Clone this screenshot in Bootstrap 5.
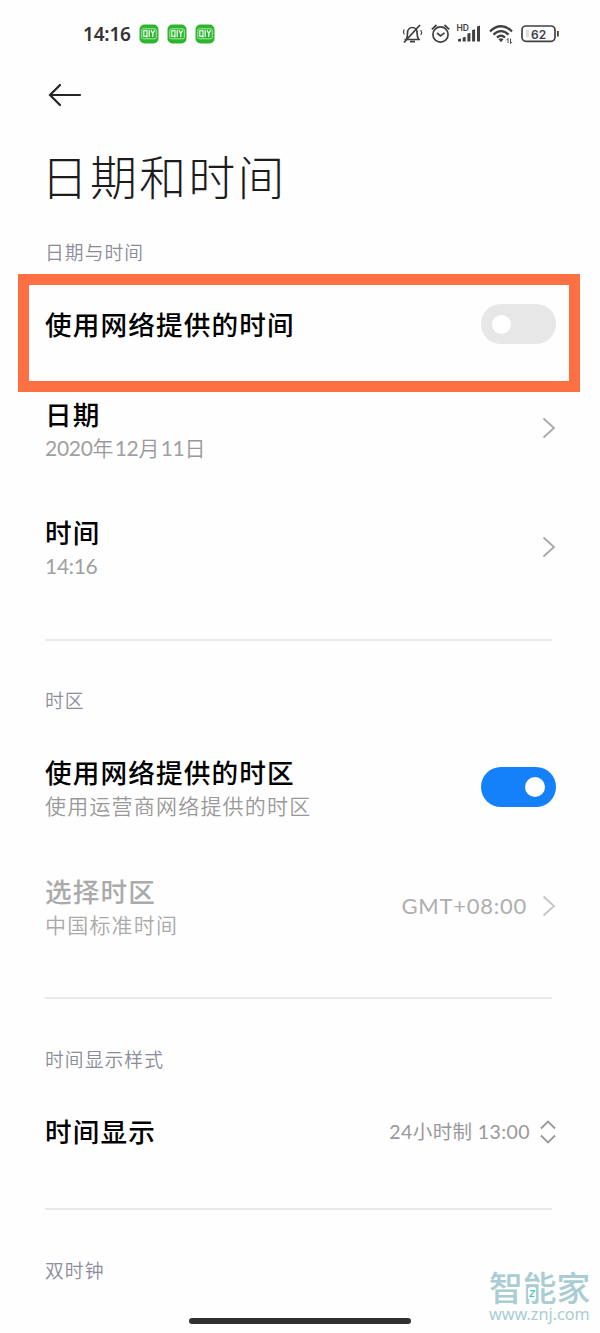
<!DOCTYPE html>
<html lang="zh-CN">
<head>
<meta charset="utf-8">
<meta name="viewport" content="width=device-width, initial-scale=1">
<title>日期和时间</title>
<link rel="stylesheet" href="https://cdn.jsdelivr.net/npm/bootstrap@5.3.0/dist/css/bootstrap.min.css">
<style>
body{background:#fefefe;color:#000;font-family:Lato,"Noto Sans CJK SC",sans-serif}
.screen{width:600px;height:1333px}
.statusbar{height:68px;padding:0 41px 0 83px;color:#333}
.clock{font:600 19px/24px "Noto Sans","Noto Sans CJK SC",sans-serif;letter-spacing:-.2px;width:56px}
.backbar{height:54px;padding-left:48px}
.page-title{height:112px;padding-left:41px;font-size:47px;font-weight:300;letter-spacing:2.1px;color:#1c1c1c;line-height:106px;font-family:"Noto Sans CJK SC",sans-serif}
.group-label{height:52px;line-height:50px;padding-left:45px;font-size:18.8px;letter-spacing:1.05px;color:#8b8c98;font-weight:350;font-family:"Noto Sans CJK SC",sans-serif}
.setting{height:119px;padding:0 44px 0 45px}
.setting-text{padding-top:5px}
.name{font-size:26.6px;line-height:33px;font-weight:500;letter-spacing:1.15px;font-family:"Noto Sans CJK SC",sans-serif;white-space:nowrap;position:relative;top:-1px}
.hint{font-size:21px;line-height:33px;letter-spacing:1.2px;color:#999;font-weight:350;white-space:nowrap}
.num{font-size:21px;letter-spacing:-.3px;font-weight:400;color:#a0a0a0}
.off .name{color:#aaa}.off .hint{color:#aaa}
.value{color:#999;white-space:nowrap}
.value-time{font-size:19.5px;letter-spacing:.4px;margin-right:10px}
.value-zone{font-size:22px;letter-spacing:.75px;color:#aeaeae;margin-right:15px}
.rule{height:2px;margin:0 48px 0 45px;background:#e9e9e9}
.toggle{width:75px;height:40px;border-radius:20px;background:#e7e7e8;padding:0 11px}
.toggle i{width:19px;height:19px;border-radius:50%;background:#fff}
.toggle.on{background:#1480fa}.toggle.on i{width:20px;height:20px}
.highlight{left:18px;top:274px;width:562px;height:118px;border:11px solid #fc7044}
.homebar{left:189px;top:1318px;width:222px;height:6px;border-radius:3px;background:#303030}
.brand{left:489px;top:1268px;color:#a9cdd3}
.brand-name{font:500 33.8px/38px "Noto Sans CJK SC",sans-serif}
.brand-url{font:400 16.2px/16px "Noto Sans",sans-serif}
.brand-z{left:39px;top:20px;font:italic 700 9px/11px Inter,sans-serif;color:#35cfc5;background:#fefefe;padding:0 1px}
</style>
<script src="https://cdn.jsdelivr.net/npm/bootstrap@5.3.0/dist/js/bootstrap.bundle.min.js"></script>
</head>
<body>
<svg class="d-none">
<symbol id="chev" viewBox="0 0 14 22"><path d="M1.5 1.5 12 11 1.5 20.5" fill="none" stroke="currentColor" stroke-width="1.8"/></symbol>
<symbol id="qiy" viewBox="0 0 20 20"><rect x=".5" y=".5" width="19" height="19" rx="5" fill="#2db52d"/><rect x="2.8" y="4.8" width="14.500" height="10" rx="1.5" fill="none" stroke="#b9efb5" stroke-width=".9"/><rect x="4.800" y="6.700" width="3.200" height="5.600" fill="none" stroke="#fff" stroke-width="1.100"/><path d="M7 11.500 8.300 13.500M10.200 6.200v6.800M12 6.200l1.800 3.300 1.800-3.300M13.800 9.300V13" fill="none" stroke="#fff" stroke-width="1.200"/></symbol>
</svg>
<main class="screen position-relative overflow-hidden">
<header class="statusbar d-flex align-items-center">
<div class="clock">14:16</div>
<div class="d-flex gap-2"><svg width="20" height="20"><use href="#qiy"/></svg><svg width="20" height="20"><use href="#qiy"/></svg><svg width="20" height="20"><use href="#qiy"/></svg></div>
<svg class="ms-auto" width="159" height="28" viewBox="400 20 159 28" fill="none" stroke="#404040" stroke-width="1.7">
<path d="M404.5 39.500h15.500M406.500 39c1-2 1-3.500 1-6 0-3 2-5.500 4.800-5.500s4.800 2.500 4.800 5.500c0 2.500 0 4 1.400 6M410 41.700h5"/><path d="M404 42.500 420 25" stroke-width="1.8"/><path d="M404.200 29.500c-1 1.700-1 3.500 0 5M420.800 30c1 1.700 1 3.500 0 5" stroke-width="1.200"/>
<circle cx="440.500" cy="34.500" r="7.600"/><path d="m437 33 3.500 3 4-3.200M431.800 29.300l4.700-4.300M449.200 29.300l-4.700-4.300"/>
<text x="456.500" y="31" fill="#404040" stroke="none" font-family="Inter, sans-serif" font-size="8.500" font-weight="600">HD</text>
<path stroke="none" fill="#404040" d="M458 39.200l3-.8v3h-3zM462.700 37.500l3-.8v4.700h-3zM467.400 33.500l3-.8v8.700h-3zM472.100 30l3-.8v12.200h-3zM477 26.500l3-1v15.900h-3z"/>
<path d="M490 31.500c6.500-7 15.500-7 22 0M493.500 34.600c4.500-4.700 10.500-4.700 15 0M497 37.600c2.700-2.700 5.300-2.700 8 0" stroke-width="2.300"/><path d="m498.500 39.300q2.500-2 5 0l-2.500 3z" fill="#404040" stroke="none"/><path d="M508 43v-4.500l-1.500 1.700M510.500 38.500v5l1.500-1.700" stroke-width=".9"/>
<rect x="522" y="26" width="33" height="15.300" rx="4"/><path d="M557.900 31v5.500" stroke-width="1.800"/><path d="M526 29.500h3v8h-3z" fill="#dedede" stroke="none"/>
<text x="531" y="38.500" fill="#404040" stroke="none" font-family="Inter, sans-serif" font-size="12" font-weight="600">62</text>
</svg>
</header>
<div class="backbar d-flex align-items-center"><svg width="34" height="24" viewBox="0 0 34 24" fill="none" stroke="#242424" stroke-width="2.200" stroke-linecap="round"><path d="M2.500 12H32M12 2 2 12l10 10"/></svg></div>
<h1 class="page-title m-0">日期和时间</h1>
<div class="group-label" style="margin-top:-7px">日期与时间</div>
<section>
<div class="setting d-flex align-items-center justify-content-between" style="height:90px"><div class="name">使用网络提供的时间</div><div class="toggle d-flex align-items-center"><i></i></div></div>
<div class="setting d-flex align-items-center justify-content-between" style="height:118px"><div class="setting-text"><div class="name">日期</div><div class="hint"><span class="num">2020</span>年<span class="num">12</span>月<span class="num">11</span>日</div></div><svg width="14" height="22" color="#a8a8a8"><use href="#chev"/></svg></div>
<div class="setting d-flex align-items-center justify-content-between"><div class="setting-text"><div class="name">时间</div><div class="hint"><span class="num">14:16</span></div></div><svg width="14" height="22" color="#a8a8a8"><use href="#chev"/></svg></div>
</section>
<div class="rule" style="margin-top:33px"></div>
<div class="group-label" style="margin-top:34px">时区</div>
<section>
<div class="setting d-flex align-items-center justify-content-between"><div class="setting-text"><div class="name">使用网络提供的时区</div><div class="hint">使用运营商网络提供的时区</div></div><div class="toggle on d-flex align-items-center justify-content-end"><i></i></div></div>
<div class="setting off d-flex align-items-center"><div class="setting-text"><div class="name">选择时区</div><div class="hint">中国标准时间</div></div><div class="value value-zone ms-auto">GMT+08:00</div><svg width="14" height="22" color="#c4c4c4"><use href="#chev"/></svg></div>
</section>
<div class="rule" style="margin-top:32px"></div>
<div class="group-label" style="margin-top:35px">时间显示样式</div>
<section>
<div class="setting d-flex align-items-center" style="height:91px"><div class="name">时间显示</div><div class="value value-time ms-auto">24小时制 13:00</div><svg width="16" height="24" viewBox="0 0 16 24" fill="none" stroke="#999" stroke-width="1.900"><path d="M1 8.500 8 1.500l7 7M1 15.500l7 7 7-7"/></svg></div>
</section>
<div class="rule" style="margin-top:31px"></div>
<div class="group-label" style="margin-top:35px">双时钟</div>
<div class="highlight position-absolute"></div>
<div class="homebar position-absolute"></div>
<div class="brand position-absolute"><div class="brand-name">智能家</div><div class="brand-url">www.znj.com</div><span class="brand-z position-absolute">Z</span></div>
</main>
</body>
</html>
